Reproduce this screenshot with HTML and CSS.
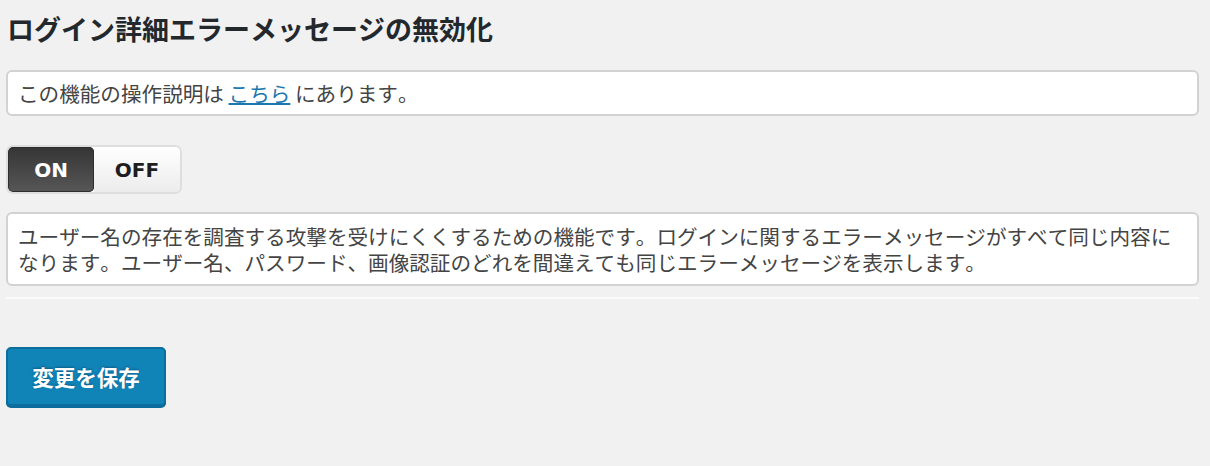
FILE: index.html
```html
<!DOCTYPE html>
<html lang="ja">
<head>
<meta charset="utf-8">
<title>ログイン詳細エラーメッセージの無効化</title>
<link rel="stylesheet" href="styles.css">
</head>
<body>
<div class="wrap">
  <h2 class="title">ログイン詳細エラーメッセージの無効化</h2>
  <div class="box box-info">この機能の操作説明は <a href="#" class="link">こちら</a> にあります。</div>
  <div class="toggle">
    <span class="seg seg-on">ON</span>
    <span class="seg seg-off">OFF</span>
  </div>
  <div class="box box-desc">ユーザー名の存在を調査する攻撃を受けにくくするための機能です。ログインに関するエラーメッセージがすべて同じ内容になります。ユーザー名、パスワード、画像認証のどれを間違えても同じエラーメッセージを表示します。</div>
  <div class="rule"></div>
  <button class="save" type="button">変更を保存</button>
</div>
</body>
</html>
```

FILE: styles.css
```css
html, body {
  margin: 0;
  padding: 0;
  background: #f1f1f1;
}
body {
  width: 1210px;
  height: 466px;
  overflow: hidden;
  font-family: "Noto Sans CJK JP", "Noto Sans", sans-serif;
  font-kerning: none;
  color: #444;
}
.wrap {
  display: flex;
  flex-direction: column;
  align-items: flex-start;
  padding: 10px 11px 0 6px;
}
.title {
  margin: 0 0 23px 1px;
  font-size: 27px;
  line-height: 37px;
  font-weight: 700;
  color: #23282d;
}
.box {
  align-self: stretch;
  background: #fff;
  border: 2px solid #d2d2d2;
  border-radius: 6px;
  font-size: 20.6px;
  line-height: 26px;
  padding: 8px 18px 8px 10px;
}
.box-info {
  margin-bottom: 29px;
}
.box-desc {
  padding: 9px 18px 9px 10px;
  line-height: 26px;
}
.link {
  color: #1a78ae;
  text-decoration: underline;
  text-decoration-thickness: 2px;
  text-underline-offset: 1px;
}
.toggle {
  display: flex;
  border: 2px solid #dedede;
  border-radius: 7px;
  overflow: hidden;
  margin-bottom: 18px;
  background: #fff;
}
.seg {
  width: 86px;
  height: 45px;
  display: flex;
  align-items: center;
  justify-content: center;
  font-family: "DejaVu Sans", "Liberation Sans", sans-serif;
  font-weight: 700;
  font-size: 20px;
}
.seg-on {
  background: linear-gradient(#353535, #575757);
  color: #fff;
  border-radius: 5px;
  box-shadow: inset 0 0 0 1px #2e2e2e;
}
.seg-off {
  background: linear-gradient(#ffffff, #ececec);
  color: #1e1e1e;
}
.rule {
  align-self: stretch;
  height: 2px;
  background: #fbfbfb;
  margin-top: 11px;
  margin-bottom: 48px;
}
.save {
  width: 160px;
  height: 60px;
  padding: 0;
  background: #1083b7;
  border: 2px solid #0c6e9e;
  border-bottom-width: 3px;
  border-radius: 5px;
  color: #fff;
  font-family: "Noto Sans CJK JP", sans-serif;
  font-size: 21.5px;
  font-weight: 700;
  text-shadow: 0 -1px 2px #0a5f8a;
  box-shadow: 0 1px 0 #0b6a98;
}
```
